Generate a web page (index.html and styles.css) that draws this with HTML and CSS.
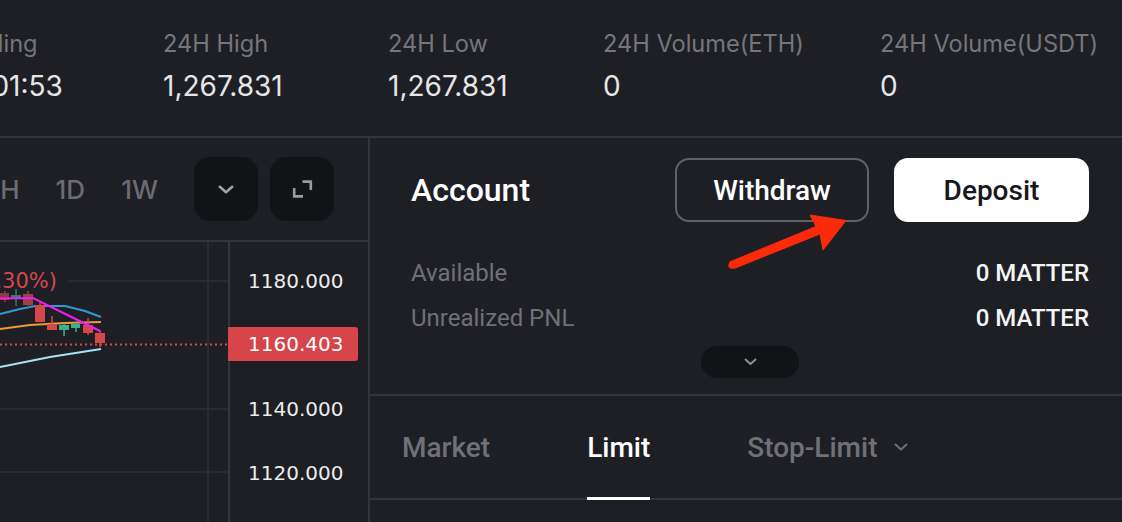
FILE: index.html
```html
<!DOCTYPE html>
<html lang="en">
<head>
<meta charset="utf-8">
<title>Trade</title>
<link rel="stylesheet" href="styles.css">
</head>
<body>
<div class="app">
  <header class="stats">
    <div class="stat"><div class="stat-label">Funding</div><div class="stat-value">00:01:53</div></div>
    <div class="stat"><div class="stat-label">24H High</div><div class="stat-value">1,267.831</div></div>
    <div class="stat"><div class="stat-label">24H Low</div><div class="stat-value">1,267.831</div></div>
    <div class="stat"><div class="stat-label">24H Volume(ETH)</div><div class="stat-value">0</div></div>
    <div class="stat"><div class="stat-label">24H Volume(USDT)</div><div class="stat-value">0</div></div>
  </header>

  <main class="main">
    <section class="chart-col">
      <div class="chart-toolbar">
        <span class="tf">15m</span>
        <span class="tf">1H</span>
        <span class="tf">4H</span>
        <span class="tf">1D</span>
        <span class="tf">1W</span>
        <div class="tool-btns">
          <button class="icon-btn" aria-label="More">
            <svg width="16" height="9" viewBox="0 0 16 9"><path d="M1.8 1.8 L8 7.2 L14.2 1.8" fill="none" stroke="#a1a2a7" stroke-width="2.6" stroke-linecap="round" stroke-linejoin="round"/></svg>
          </button>
          <button class="icon-btn" aria-label="Fullscreen">
            <svg width="21" height="20" viewBox="0 0 21 20"><path d="M10.5 2.6 H18.8 V11 M2.2 9 V17.4 H11" fill="none" stroke="#9a9ba0" stroke-width="2.6"/></svg>
          </button>
        </div>
      </div>
      <div class="chart-body">
        <div class="plot">
          <svg class="plot-svg" width="228" height="280" viewBox="0 242 228 280">
            <g stroke="#2a2b2d" stroke-width="2">
              <line x1="68" y1="281" x2="228" y2="281"/>
              <line x1="0" y1="409" x2="228" y2="409"/>
              <line x1="0" y1="472" x2="228" y2="472"/>
              <line x1="208" y1="242" x2="208" y2="522"/>
            </g>
            <text x="57" y="288" text-anchor="end" class="chg">(-1.30%)</text>
            <line x1="0" y1="344.5" x2="228" y2="344.5" stroke="#d9484a" stroke-width="2" stroke-dasharray="2 3"/>
            <g fill="none" stroke-width="2" stroke-linejoin="round">
              <polyline points="0,314 20,309 35,306 65,306 85,311 101,317" stroke="#2c9ad6"/>
              <polyline points="0,329 30,325 65,323 101,322" stroke="#ee9a3c"/>
              <polyline points="0,367 50,357 101,349" stroke="#a8e2f3"/>
            </g>
            <g>
              <rect x="4" y="291" width="1.5" height="11" fill="#8a3c3e"/>
              <rect x="0" y="293" width="9" height="7" fill="#8a3c3e"/>
              <rect x="15.3" y="289" width="1.5" height="17" fill="#2e8068"/>
              <rect x="11" y="295" width="10" height="3" fill="#2e8068"/>
              <rect x="27.3" y="291" width="1.5" height="18" fill="#9c4244"/>
              <rect x="23" y="294" width="10" height="11" fill="#9c4244"/>
              <rect x="39.3" y="302" width="1.5" height="20" fill="#d4474a"/>
              <rect x="35" y="305" width="10" height="17" fill="#d4474a"/>
              <rect x="51.3" y="316" width="1.5" height="14" fill="#d4474a"/>
              <rect x="47" y="324" width="10" height="6" fill="#d4474a"/>
              <rect x="63.3" y="323" width="1.5" height="13" fill="#3cae88"/>
              <rect x="59" y="325" width="10" height="5" fill="#3cae88"/>
              <rect x="75.3" y="321" width="1.5" height="11" fill="#3cae88"/>
              <rect x="71" y="324" width="9" height="4" fill="#3cae88"/>
              <rect x="87.3" y="318" width="1.5" height="17" fill="#d4474a"/>
              <rect x="83" y="325" width="10" height="8" fill="#d4474a"/>
              <rect x="99.3" y="330" width="1.5" height="17" fill="#d4474a"/>
              <rect x="95" y="333" width="10" height="10" fill="#d4474a"/>
            </g>
            <polyline points="0,298.5 33,298 100,331" fill="none" stroke="#f01cf0" stroke-width="2"/>
          </svg>
        </div>
        <div class="axis">
          <span class="price" style="top:22px">1180.000</span>
          <span class="price price-last" style="top:85px">1160.403</span>
          <span class="price" style="top:150px">1140.000</span>
          <span class="price" style="top:214px">1120.000</span>
        </div>
      </div>
    </section>

    <section class="acct-col">
      <div class="acct-head">
        <h2 class="acct-title">Account</h2>
        <button class="btn btn-outline">Withdraw</button>
        <button class="btn btn-solid">Deposit</button>
      </div>
      <div class="acct-rows">
        <div class="acct-row"><span class="acct-label">Available</span><span class="acct-val">0 MATTER</span></div>
        <div class="acct-row"><span class="acct-label">Unrealized PNL</span><span class="acct-val">0 MATTER</span></div>
      </div>
      <div class="expand">
        <button class="pill" aria-label="Expand">
          <svg width="13" height="8" viewBox="0 0 13 8"><path d="M1.5 1.5 L6.5 6 L11.5 1.5" fill="none" stroke="#8e8f94" stroke-width="2" stroke-linecap="round" stroke-linejoin="round"/></svg>
        </button>
      </div>
      <nav class="tabs">
        <span class="tab">Market</span>
        <span class="tab tab-active">Limit</span>
        <span class="tab">Stop-Limit
          <svg class="tab-caret" width="14" height="8" viewBox="0 0 14 8"><path d="M1.5 1.5 L7 6.5 L12.5 1.5" fill="none" stroke="#707176" stroke-width="2" stroke-linecap="round" stroke-linejoin="round"/></svg>
        </span>
      </nav>
      <div class="form-area"></div>
    </section>
  </main>

  <svg class="annot" width="1122" height="522" viewBox="0 0 1122 522" aria-hidden="true">
    <polygon points="729.5,262 816,226.5 810,215 846,220.5 823,250 820,234 734,268.5" fill="#fb2a0b" stroke="#fb2a0b" stroke-width="1" stroke-linejoin="round"/>
    <circle cx="731.8" cy="265.3" r="3.4" fill="#fb2a0b"/>
  </svg>
</div>
</body>
</html>
```

FILE: styles.css
```css
* { box-sizing: border-box; }

html, body {
  margin: 0;
  padding: 0;
}

body {
  width: 1122px;
  height: 522px;
  overflow: hidden;
  background: #1e1f24;
  font-family: Inter, "Noto Sans", sans-serif;
}

.app {
  position: relative;
  width: 1122px;
  height: 522px;
  overflow: hidden;
}

/* ---------- top stats ---------- */
.stats {
  height: 138px;
  margin-left: -52px;
  padding-top: 29px;
  border-bottom: 2px solid #34353a;
  display: grid;
  grid-template-columns: 215px 225px 215px 277px 1fr;
}

.stat-label {
  font-size: 23.6px;
  line-height: 30px;
  color: #75767b;
  white-space: nowrap;
}

.stat-value {
  margin-top: 9px;
  font-size: 28px;
  line-height: 36px;
  color: #e6e6e7;
  white-space: nowrap;
}

/* ---------- main ---------- */
.main {
  display: flex;
  height: 384px;
}

.chart-col {
  width: 370px;
  flex-shrink: 0;
  border-right: 2px solid #34353a;
  display: flex;
  flex-direction: column;
  overflow: hidden;
}

.chart-toolbar {
  height: 104px;
  flex-shrink: 0;
  border-bottom: 2px solid #34353a;
  display: flex;
  align-items: center;
  justify-content: flex-end;
  gap: 36px;
  padding-right: 34px;
}

.tf {
  flex-shrink: 0;
  font-size: 26px;
  font-weight: 500;
  color: #6b6c71;
  white-space: nowrap;
}

.tool-btns {
  flex-shrink: 0;
  display: flex;
  gap: 12px;
}

.icon-btn {
  width: 64px;
  height: 64px;
  border: 0;
  padding: 0;
  border-radius: 16px;
  background: #121317;
  display: flex;
  align-items: center;
  justify-content: center;
}

.chart-body {
  flex: 1;
  display: flex;
}

.plot {
  width: 228px;
  flex-shrink: 0;
}

.plot-svg {
  display: block;
}

.chg {
  font-family: "DejaVu Sans", sans-serif;
  font-size: 21px;
  fill: #d4494b;
}

.axis {
  flex: 1;
  position: relative;
  border-left: 2px solid #34353a;
}

.price {
  position: absolute;
  left: -2px;
  height: 34px;
  line-height: 34px;
  padding-left: 20px;
  padding-right: 12px;
  font-family: "DejaVu Sans", sans-serif;
  font-size: 20px;
  color: #ececec;
}

.price-last {
  background: #d5454a;
  color: #fff;
  border-radius: 0 3px 3px 0;
  width: 130px;
}

/* ---------- account panel ---------- */
.acct-col {
  flex: 1;
  display: flex;
  flex-direction: column;
  font-family: Roboto, "Liberation Sans", sans-serif;
}

.acct-head {
  display: flex;
  align-items: center;
  padding: 20px 33px 0 41px;
}

.acct-title {
  flex: 1;
  margin: 0;
  font-size: 32px;
  font-weight: 500;
  color: #fff;
}

.btn {
  height: 64px;
  border-radius: 14px;
  font-family: Roboto, "Liberation Sans", sans-serif;
  font-size: 28px;
  font-weight: 500;
  padding: 0;
}

.btn-outline {
  width: 194px;
  border: 2px solid #616266;
  background: transparent;
  color: #fff;
}

.btn-solid {
  width: 195px;
  margin-left: 25px;
  border: 0;
  background: #fff;
  color: #17181c;
}

.acct-rows {
  padding: 28px 33px 0 41px;
}

.acct-row {
  height: 45px;
  display: flex;
  align-items: center;
  justify-content: space-between;
  font-size: 24px;
}

.acct-label {
  color: #707176;
}

.acct-val {
  color: #f5f5f5;
  font-weight: 500;
}

.expand {
  display: flex;
  justify-content: center;
  padding: 6px 33px 16px 41px;
}

.pill {
  width: 98px;
  height: 32px;
  border: 0;
  padding: 0;
  border-radius: 16px;
  background: #121317;
  display: flex;
  align-items: center;
  justify-content: center;
}

.tabs {
  height: 106px;
  flex-shrink: 0;
  border-top: 2px solid #34353a;
  border-bottom: 2px solid #34353a;
  display: flex;
  gap: 97px;
  padding-left: 32px;
}

.tab {
  position: relative;
  display: flex;
  align-items: center;
  font-size: 28px;
  font-weight: 500;
  color: #707176;
}

.tab-active {
  color: #fff;
}

.tab-active::after {
  content: "";
  position: absolute;
  left: 0;
  right: 0;
  bottom: -2px;
  height: 3px;
  background: #fff;
}

.tab-caret {
  margin-left: 17px;
}

.form-area {
  flex: 1;
}

/* ---------- annotation ---------- */
.annot {
  position: absolute;
  left: 0;
  top: 0;
  pointer-events: none;
}
```
